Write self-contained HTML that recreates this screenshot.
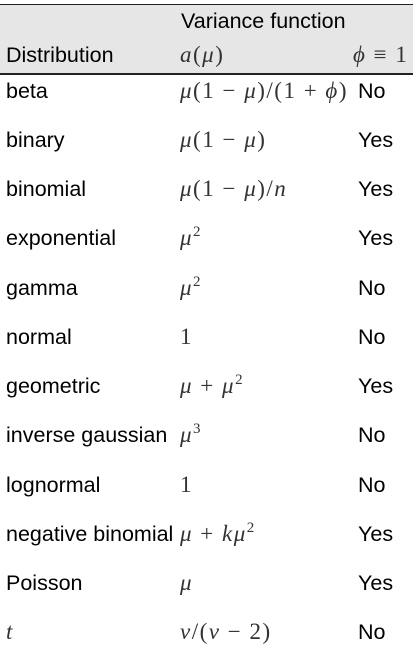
<!DOCTYPE html><html><head><style>
body{margin:0;width:419px;height:664px;background:#fff;position:relative;overflow:hidden;font-family:"Liberation Sans",Arial,sans-serif;font-size:21.5px;color:#000}
.hd{position:absolute;left:0;top:4px;width:413px;height:68px;background:#e6e6e6;border-top:1.5px solid #222;border-bottom:2px solid #222}
.t{position:absolute;line-height:26px;white-space:nowrap}
.m{font-family:"Liberation Serif",serif;font-style:italic;color:#333;font-size:23px;letter-spacing:1.5px}
.m sup{font-size:15px;font-style:normal;vertical-align:9px;line-height:0}
.r{font-style:normal}
</style></head><body>
<div class="hd"></div>
<div class="t" style="left:181px;top:8px">Variance function</div>
<div class="t" style="left:6px;top:42px">Distribution</div>
<div class="t m" style="left:180px;top:42px">a<span class="r">(</span>μ<span class="r">)</span></div>
<div class="t m" style="left:353px;top:42px">ϕ <span class="r">≡ 1</span></div>

<div class="t" style="left:6px;top:78px">beta</div><div class="t m" style="left:180px;top:78px">μ<span class="r">(1 − </span>μ<span class="r">)/(1 + </span>ϕ<span class="r">)</span></div><div class="t" style="left:358px;top:78px">No</div>
<div class="t" style="left:6px;top:127px">binary</div><div class="t m" style="left:180px;top:127px">μ<span class="r">(1 − </span>μ<span class="r">)</span></div><div class="t" style="left:358px;top:127px">Yes</div>
<div class="t" style="left:6px;top:176px">binomial</div><div class="t m" style="left:180px;top:176px">μ<span class="r">(1 − </span>μ<span class="r">)/</span>n</div><div class="t" style="left:358px;top:176px">Yes</div>
<div class="t" style="left:6px;top:225px">exponential</div><div class="t m" style="left:180px;top:225px">μ<sup>2</sup></div><div class="t" style="left:358px;top:225px">Yes</div>
<div class="t" style="left:6px;top:275px">gamma</div><div class="t m" style="left:180px;top:275px">μ<sup>2</sup></div><div class="t" style="left:358px;top:275px">No</div>
<div class="t" style="left:6px;top:324px">normal</div><div class="t m" style="left:180px;top:324px"><span class="r">1</span></div><div class="t" style="left:358px;top:324px">No</div>
<div class="t" style="left:6px;top:373px">geometric</div><div class="t m" style="left:180px;top:373px">μ <span class="r">+</span> μ<sup>2</sup></div><div class="t" style="left:358px;top:373px">Yes</div>
<div class="t" style="left:6px;top:422px">inverse gaussian</div><div class="t m" style="left:180px;top:422px">μ<sup>3</sup></div><div class="t" style="left:358px;top:422px">No</div>
<div class="t" style="left:6px;top:472px">lognormal</div><div class="t m" style="left:180px;top:472px"><span class="r">1</span></div><div class="t" style="left:358px;top:472px">No</div>
<div class="t" style="left:6px;top:521px">negative binomial</div><div class="t m" style="left:180px;top:521px">μ <span class="r">+</span> kμ<sup>2</sup></div><div class="t" style="left:358px;top:521px">Yes</div>
<div class="t" style="left:6px;top:570px">Poisson</div><div class="t m" style="left:180px;top:570px">μ</div><div class="t" style="left:358px;top:570px">Yes</div>
<div class="t m" style="left:6px;top:619px">t</div><div class="t m" style="left:180px;top:619px">ν<span class="r">/(</span>ν<span class="r"> − 2)</span></div><div class="t" style="left:358px;top:619px">No</div>
</body></html>
